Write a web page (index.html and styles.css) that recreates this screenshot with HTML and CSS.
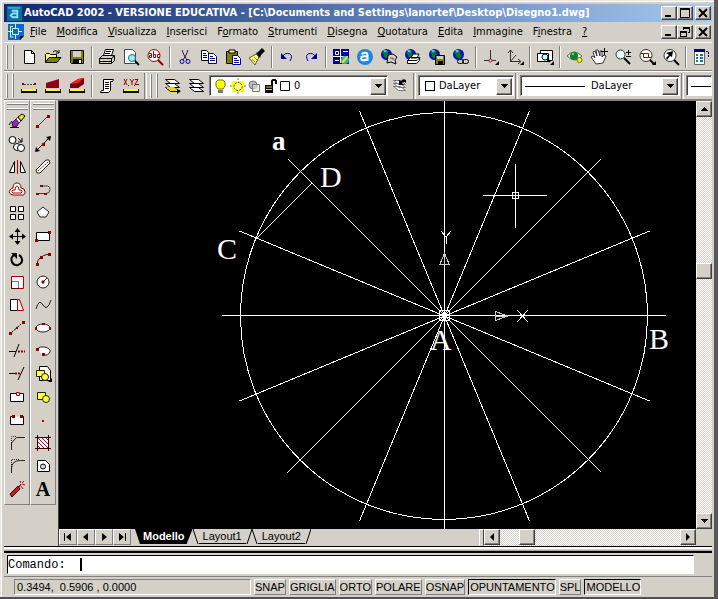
FILE: index.html
```html
<!DOCTYPE html>
<html lang="it">
<head>
<meta charset="utf-8">
<title>AutoCAD 2002</title>
<link rel="stylesheet" href="styles.css">
</head>
<body>
<svg class="defs" aria-hidden="true">
  <symbol id="globe" viewBox="0 0 10 10"><circle cx="5" cy="5" r="5" fill="#0018b0"/><path d="M1 3l3-2 3 1-1 2 2 2-2 3-3-2-1-3z" fill="#087830"/><path d="M2 1h3v2H3z" fill="#50c8e8"/></symbol>
  <symbol id="down" viewBox="0 0 8 8"><path d="M1 2h7v1H7v1H6v1H5v1H4V5H3V4H2V3H1z"/></symbol>
  <symbol id="up" viewBox="0 0 8 8"><path d="M4 2h1v1h1v1h1v1h1v1H1V5h1V4h1V3h1z"/></symbol>
  <symbol id="left" viewBox="0 0 8 8"><path d="M2 4l4-4v8z"/></symbol>
  <symbol id="right" viewBox="0 0 8 8"><path d="M6 4L2 0v8z"/></symbol>
  <symbol id="sheets" viewBox="0 0 18 18"><path d="M1.500 10.500h9l5 4h-9zM1.500 6.500h9l5 4h-9zM1.500 2.500h9l5 4h-9z" fill="#fff" stroke="#000"/></symbol>
</svg>
<div class="app">
  <header class="title">
    <svg class="logo" viewBox="0 0 16 16"><path fill="#0c6c9c" d="M0 0h16v16H0z"/><path fill="#28a8d8" d="M1 1h13v2H1z"/><path d="M5 5h6v7H6l-2-2 2-2h4" fill="none" stroke="#8ce0f8" stroke-width="2"/></svg>
    <h1>AutoCAD 2002 - VERSIONE EDUCATIVA - [C:\Documents and Settings\lanortef\Desktop\Disegno1.dwg]</h1>
    <div class="winbtns">
      <button aria-label="Riduci"><svg viewBox="0 0 12 10"><path d="M2 7h6v2H2z"/></svg></button>
      <button aria-label="Ingrandisci"><svg viewBox="0 0 12 10"><path d="M1 0h10v10H1zM2 2v7h8V2z" fill-rule="evenodd"/></svg></button>
      <button class="close" aria-label="Chiudi"><svg viewBox="0 0 12 10"><path d="M2 1l8 8M10 1L2 9" stroke="#000" stroke-width="2"/></svg></button>
    </div>
  </header>

  <nav class="menu">
    <svg class="doc" viewBox="0 0 16 16"><path fill="#0868d0" d="M0 0h16v12l-4 4H0z"/><path d="M12 16v-4h4z" fill="#000"/><path d="M0 7.500h5M11 7.500h3M7.500 0v4M7.500 11v4M4.500 4.500h6v6h-6zM2 2.500h3M2.500 3v10h3" stroke="#d8f0ff" fill="none"/></svg>
    <a href="#"><u>F</u>ile</a><a href="#"><u>M</u>odifica</a><a href="#"><u>V</u>isualizza</a><a href="#"><u>I</u>nserisci</a><a href="#">F<u>o</u>rmato</a><a href="#"><u>S</u>trumenti</a><a href="#"><u>D</u>isegna</a><a href="#"><u>Q</u>uotatura</a><a href="#"><u>E</u>dita</a><a href="#"><u>I</u>mmagine</a><a href="#">F<u>i</u>nestra</a><a href="#"><u>?</u></a>
    <div class="winbtns">
      <button aria-label="Riduci disegno"><svg viewBox="0 0 12 10"><path d="M2 7h6v2H2z"/></svg></button>
      <button aria-label="Ripristina disegno"><svg viewBox="0 0 12 10"><path d="M4 0h7v6H9V5h1V2H5v1H4zM1 4h7v6H1zM2 6v3h5V6z" fill-rule="evenodd"/></svg></button>
      <button class="close" aria-label="Chiudi disegno"><svg viewBox="0 0 12 10"><path d="M2 1l8 8M10 1L2 9" stroke="#000" stroke-width="2"/></svg></button>
    </div>
  </nav>

  <div class="bar">
    <i class="grip"></i>
    <button class="t" aria-label="Nuovo"><svg viewBox="0 0 18 18"><path d="M4.500 2.500h7l3 3v10h-10z" fill="#fff" stroke="#000"/><path d="M11.500 2.500v3h3" fill="none" stroke="#000"/></svg></button>
    <button class="t" aria-label="Apri"><svg viewBox="0 0 18 18"><path d="M1.500 14V6.500l1-1h3l1 1h6V9" fill="#ffff80" stroke="#000"/><path d="M1.500 14.500L5 9.500h12l-4 5z" fill="#808000" stroke="#000"/><path d="M9 4q3-3 6 1M15 2v3h-3" fill="none" stroke="#000"/></svg></button>
    <button class="t" aria-label="Salva"><svg viewBox="0 0 18 18"><path d="M2.500 2.500h13v13h-12l-1-1z" fill="#808000" stroke="#000"/><path d="M5 3h8v6H5z" fill="#d4d0c8"/><path d="M5 11h9v4H5z"/><path d="M11 12h2v3h-2z" fill="#fff"/></svg></button>
    <i class="sep"></i>
    <button class="t" aria-label="Stampa"><svg viewBox="0 0 18 18"><path d="M5.500 7.500l2-6h8l-2 6z" fill="#fff" stroke="#000"/><path d="M8 3.500h5M7 5.500h5" stroke="#000"/><path d="M1.500 10.500l3-3h12v5l-3 3h-12z" fill="#d4d0c8" stroke="#000"/><path d="M1 10.500h13l2-3M13.500 10v5M2 13.500h11" stroke="#000" fill="none"/><path d="M10 12h2v1h-2z" fill="#cc0"/></svg></button>
    <button class="t" aria-label="Anteprima"><svg viewBox="0 0 18 18"><path d="M2.500 1.500h8l3 3v11h-11z" fill="#fff" stroke="#444"/><circle cx="10" cy="10" r="3.500" fill="#a0f0f8" stroke="#007090"/><path d="M13 13l4 4" stroke="#000" stroke-width="2"/></svg></button>
    <button class="t" aria-label="Trova"><svg viewBox="0 0 18 18"><circle cx="8" cy="7.500" r="6" fill="#fff" stroke="#900000"/><path d="M12 12l5 5" stroke="#900000" stroke-width="2"/><path d="M3 5.500h2.500v4h-2v-2h2M7.500 3v6.500h2v-3h-2M14 6.500h-2.500v3H14" fill="none" stroke="#b00000"/></svg></button>
    <i class="sep"></i>
    <button class="t" aria-label="Taglia"><svg viewBox="0 0 18 18"><path d="M6 2l2 5 3 5M12 2l-2 5-3 5" fill="none" stroke="#202040"/><circle cx="6" cy="13.500" r="2" fill="none" stroke="#000090"/><circle cx="12" cy="13.500" r="2" fill="none" stroke="#000090"/></svg></button>
    <button class="t" aria-label="Copia"><svg viewBox="0 0 18 18"><path d="M1.500 2.500h5l2 2v8h-7z" fill="#fff" stroke="#000"/><path d="M3 5.500h3M3 7.500h4M3 9.500h4" stroke="#000"/><path d="M8.500 5.500h5l3 3v7h-8z" fill="#fff" stroke="#000090"/><path d="M10 8.500h3M10 10.500h5M10 12.500h5" stroke="#000090"/></svg></button>
    <button class="t" aria-label="Incolla"><svg viewBox="0 0 18 18"><path d="M2.500 3.500h11v12h-11z" fill="#808000" stroke="#000"/><path d="M5 2h6v3H5z" fill="#ff8" stroke="#000"/><path d="M8.500 7.500h5l3 3v6h-8z" fill="#fff" stroke="#000090"/><path d="M10 10.500h3M10 12.500h5M10 14.500h5" stroke="#000090"/></svg></button>
    <button class="t" aria-label="Corrispondenza"><svg viewBox="0 0 18 18"><path d="M1 10l7-4 3 3-4 8z" fill="#ffff60" stroke="#555"/><path d="M4 11l3 3M6 9l3 3" stroke="#886"/><path d="M8 5l2-1 4-4 3 3-4 4-1 3z"/></svg></button>
    <i class="sep"></i>
    <button class="t" aria-label="Annulla"><svg viewBox="0 0 18 18"><path d="M4 9q3-5 8-3 3 2 0 7" fill="none" stroke="#000090"/><path d="M3 5v6h6z" fill="#000090"/></svg></button>
    <button class="t" aria-label="Ripeti"><svg viewBox="0 0 18 18"><path d="M14 9q-3-5-8-3-3 2 0 7" fill="none" stroke="#000090"/><path d="M15 5v6H9z" fill="#000090"/></svg></button>
    <i class="sep"></i>
    <button class="t" aria-label="Today"><svg viewBox="0 0 18 18"><path fill="#000090" d="M1 1h16v15H1z"/><path d="M1 8.500h15M8.500 1v14M3.500 3.500h3v3h-3zM11 3.500h5M3 12.500h4" stroke="#fff" fill="none"/><circle cx="13" cy="12" r="4" fill="#28b8b0"/><path d="M10 15l5-6" stroke="#fd0" stroke-width="2"/></svg></button>
    <button class="t" aria-label="Point A"><svg viewBox="0 0 18 18"><circle cx="9" cy="9" r="8" fill="#1888e0"/><path d="M5.500 6q6-3 6 1v6M11 8.500q-6-1-6 2t6 1" fill="none" stroke="#fff" stroke-width="2"/></svg></button>
    <button class="t" aria-label="Meet Now"><svg viewBox="0 0 18 18"><use href="#globe" x="1" y="1" width="11" height="11"/><path d="M8 7l5-1 4 3-2 3 1 4-5-2-4 1z" fill="#d4d0c8" stroke="#000"/><path d="M10 10h3v2" fill="none" stroke="#555"/></svg></button>
    <button class="t" aria-label="Pubblica"><svg viewBox="0 0 18 18"><use href="#globe" x="1" y="1" width="11" height="11"/><path d="M7 10l2-4h6l-2 4zM3.500 12.500l3-3h9v3l-3 3h-9z" fill="#fff" stroke="#000"/><path d="M3 12.500h10l3-3" fill="none" stroke="#000"/></svg></button>
    <button class="t" aria-label="eTransmit"><svg viewBox="0 0 18 18"><use href="#globe" x="1" y="1" width="11" height="11"/><path d="M7.500 7.500h9v9h-9z" fill="#808000" stroke="#000"/><path d="M9 8h6v3H9z" fill="#d4d0c8"/><path d="M10 13h5v3h-5z"/></svg></button>
    <button class="t" aria-label="Collegamento"><svg viewBox="0 0 18 18"><use href="#globe" x="1" y="1" width="11" height="11"/><rect x="5.500" y="11.500" width="6" height="4" rx="2" fill="#ccc" stroke="#000"/><rect x="10.500" y="11.500" width="6" height="4" rx="2" fill="none" stroke="#000"/></svg></button>
    <i class="sep"></i>
    <button class="t" aria-label="Tracking"><svg viewBox="0 0 18 18"><path d="M8.500 2v10M2 12.500h12" stroke="#333"/><circle cx="8.500" cy="12.500" r="1.500" fill="#fff" stroke="#900"/><path d="M17 13v4h-4z"/></svg></button>
    <button class="t" aria-label="UCS"><svg viewBox="0 0 18 18"><path d="M4.500 2v11.500H14M4 14l6-7M2 5l2.500-3L7 5M12 11l3 2.500-3 2.500" fill="none" stroke="#333"/><path d="M18 13v4h-4z"/></svg></button>
    <i class="sep"></i>
    <button class="t" aria-label="Viste"><svg viewBox="0 0 18 18"><path d="M4.500 2.500h12v10h-12z" fill="#fff" stroke="#000"/><path d="M1.500 5.500h11v8h-11z" fill="#fff" stroke="#000"/><circle cx="9" cy="9" r="3" fill="#bff" stroke="#000"/><path d="M11 11l3 3" stroke="#000" stroke-width="2"/><path d="M18 13v4h-4z"/></svg></button>
    <i class="sep"></i>
    <button class="t" aria-label="Vista aerea"><svg viewBox="0 0 18 18"><path d="M1 8q7-8 15 0-7 8-15 0z" fill="#e8f8e8" stroke="#487848"/><circle cx="8" cy="8" r="4" fill="#108030"/><path d="M6 5h2v2H6z" fill="#6d6"/><circle cx="13.500" cy="12" r="2.500" fill="#ff0" stroke="#663"/></svg></button>
    <button class="t" aria-label="Pan"><svg viewBox="0 0 18 18"><path d="M6 16l-5-7 2-1 2 2-2-6 2-1 2 5-1-6h2l2 6V3h2v6l2-2 2 1-3 7z" fill="#fff" stroke="#333"/><path d="M14.500 0v7M11 3.500h7" stroke="#000"/></svg></button>
    <button class="t" aria-label="Zoom realtime"><svg viewBox="0 0 18 18"><circle cx="6.500" cy="6.500" r="4.500" fill="#e8ffff" stroke="#333"/><path d="M10 10l6 6" stroke="#000" stroke-width="2"/><path d="M12 4.500h5M14.500 2v5M12 8.500h5" stroke="#000"/></svg></button>
    <button class="t" aria-label="Zoom finestra"><svg viewBox="0 0 18 18"><circle cx="8" cy="7.500" r="6" fill="#fff" stroke="#333"/><path d="M5.500 5.500h5v4h-5zM3 5.500h3M10 9.500h3" fill="none" stroke="#a00"/><path d="M12 12l4 4" stroke="#000" stroke-width="2"/><path d="M18 13v4h-4z"/></svg></button>
    <button class="t" aria-label="Zoom precedente"><svg viewBox="0 0 18 18"><circle cx="8" cy="7.500" r="6" fill="#fff" stroke="#333"/><path d="M4 5l7-2-1 6-2-1-3 4-1-2 3-3z"/><path d="M12 12l5 5" stroke="#000" stroke-width="2"/></svg></button>
    <i class="sep"></i>
    <button class="t" aria-label="Proprietà"><svg viewBox="0 0 18 18"><path d="M2.500 1.500h10v15h-10z" fill="#fff" stroke="#666"/><path d="M2 1h11v3H2z" fill="#000090"/><path d="M4 7h2m2 0h3M4 10h2m2 0h3M4 13h2m2 0h3" stroke="#088098" stroke-width="2"/><path d="M14 3.500h2.500V10" fill="none" stroke="#000090" stroke-dasharray="2 1"/></svg></button>
  </div>

  <div class="bar second">
    <i class="grip"></i>
    <button class="t" aria-label="Distanza"><svg viewBox="0 0 18 18"><path d="M2 6h2v2H2zM14 6h2v2h-2z" fill="#800000"/><path d="M4 7.500h10" stroke="#444" stroke-dasharray="2 1"/><path d="M1 12h16v4H1z"/><path d="M2 12h14v2H2z" fill="#ff0"/></svg></button>
    <button class="t" aria-label="Area"><svg viewBox="0 0 18 18"><path d="M2 11V6l13-4v9z" fill="#900018"/><path d="M1 12h16v4H1z"/><path d="M2 12h14v2H2z" fill="#ff0"/></svg></button>
    <button class="t" aria-label="Massa"><svg viewBox="0 0 18 18"><path d="M2 11V7l8-5 6-1v6l-6 4z" fill="#800010"/><path d="M2 7l8-5 6-1-6 5z" fill="#ff2020"/><path d="M10 7v4" stroke="#300"/><path d="M1 12h16v4H1z"/><path d="M2 12h14v2H2z" fill="#ff0"/></svg></button>
    <i class="sep"></i>
    <button class="t" aria-label="Lista"><svg viewBox="0 0 18 18"><path d="M5.500 2.500h10l-1 2h-2v9l-2 2h-8l1-2h2z" fill="#fff" stroke="#000"/><path d="M7 5.500h4M7 7.500h4M7 9.500h4M7 11.500h4" stroke="#000"/></svg></button>
    <button class="t" aria-label="Individua punto"><svg viewBox="0 0 18 18"><path d="M2 2l3 6M5 2L2 8M8 2l2 3 2-3M10 5v3M13 2.500h3l-3 5h4M6.500 8v1M12.500 8v1" stroke="#900000" fill="none"/><path d="M1 12h16v4H1z"/><path d="M2 12h14v2H2z" fill="#ff0"/></svg></button>
    <i class="edge"></i><i class="grip double"></i>
    <button class="t" aria-label="Layer corrente"><svg viewBox="0 0 18 18"><use href="#sheets" width="18" height="18"/><path d="M2 10h8l5 4H7z" fill="#e8d800"/><path d="M13 12l4 2-4 3z"/></svg></button>
    <button class="t" aria-label="Layer"><svg viewBox="0 0 18 18"><use href="#sheets" width="18" height="18"/></svg></button>
    <div class="combo layer">
      <svg class="state" viewBox="0 0 82 16"><path d="M6 2h5l2 2v4l-2 3H6L4 8V4z" fill="#ff0" stroke="#770"/><path d="M6 12h5v3H6z" fill="#777"/><path d="M20 3h12v11H20z" fill="#ff0"/><circle cx="26" cy="8.500" r="4" fill="#ffff80" stroke="#550" stroke-dasharray="2 1"/><path d="M18 8h2M32 8h2M25 1h2M25 15h2" stroke="#880"/><circle cx="41" cy="7" r="4" fill="#bbb" stroke="#777"/><path d="M40.500 6.500h7v7h-7z" fill="#ddd" fill-opacity=".6" stroke="#777"/><path d="M53 7h8v8h-8z"/><path d="M54 9h6M54 11.500h6" stroke="#dd0"/><path d="M60 7V3l1-1h2l1 1v3" fill="none" stroke="#000" stroke-width="2"/><path d="M68.500 3.500h9v9h-9z" fill="#fff" stroke="#000"/></svg>
      <select aria-label="Layer"><option>0</option></select><span class="arrow"><svg viewBox="0 0 8 8"><use href="#down"/></svg></span>
    </div>
    <button class="t" aria-label="Layer precedente"><svg viewBox="0 0 18 18"><path d="M2.500 9.500h7l5 4h-7zM2.500 6.500h7l5 4h-7zM2.500 3.500h7l5 4h-7z" fill="#fff" stroke="#777"/><path d="M8 3v5h5l-2-2q2-2 4 0V3q-3-2-5 1z"/></svg></button>
    <i class="edge"></i>
    <div class="combo color"><i class="swatch"></i><select aria-label="Colore"><option>DaLayer</option></select><span class="arrow"><svg viewBox="0 0 8 8"><use href="#down"/></svg></span></div>
    <i class="edge"></i>
    <div class="combo ltype"><i class="line"></i><select aria-label="Tipo di linea"><option>DaLayer</option></select><span class="arrow"><svg viewBox="0 0 8 8"><use href="#down"/></svg></span></div>
    <i class="edge"></i>
    <div class="combo weight"><i class="line"></i></div>
  </div>

  <main class="main">
    <div class="palettes">
      <div class="palette"><i class="hgrip"></i>
        <button aria-label="Cancella"><svg viewBox="0 0 18 18"><path d="M2 15.500h9M1 13l3-4" stroke="#000"/><path d="M4 11l4-4 3 4-3 4H5z" fill="#a020c0" stroke="#303"/><path d="M8 7l2-2 3 4-2 2z" fill="#fff" stroke="#444"/><path d="M10 5l4-3 3 2-4 5z" fill="#f0e020" stroke="#000"/></svg></button>
        <button aria-label="Copia oggetto"><svg viewBox="0 0 18 18"><circle cx="4.500" cy="5" r="3.500" fill="#fff" stroke="#000"/><circle cx="9" cy="12" r="3.500" fill="#fff" stroke="#000"/><circle cx="13" cy="13" r="3.500" fill="#fff" stroke="#000"/><path d="M10 3l4 4M14 3v4h-4" fill="none" stroke="#000"/></svg></button>
        <button aria-label="Specchio"><svg viewBox="0 0 18 18"><path d="M6.500 3.500v11h-5zM12.500 3.500v11h5z" fill="#fff" stroke="#000"/><path d="M9.500 2v14" stroke="#b00000"/></svg></button>
        <button aria-label="Offset"><svg viewBox="0 0 18 18"><path d="M5 14q-5-1-3-5 1-2 3-2 0-5 4-5t4 5q4 0 4 4t-4 3z" fill="#fff" stroke="#800000"/><path d="M5 12q-3-3 2-3 0-4 2-4t2 4q5 0 2 3z" fill="none" stroke="#b00000"/></svg></button>
        <button aria-label="Serie"><svg viewBox="0 0 18 18"><path d="M2.500 2.500h5v5h-5zM10.500 2.500h5v5h-5zM2.500 10.500h5v5h-5zM10.500 10.500h5v5h-5z" fill="#fff" stroke="#000"/></svg></button>
        <button aria-label="Sposta"><svg viewBox="0 0 18 18"><path d="M9.500 3v13M3 9.500h13" stroke="#000"/><path d="M9.500 1l3 4h-6zM9.500 18l3-4h-6zM1 9.500l4-3v6zM18 9.500l-4-3v6z"/></svg></button>
        <button aria-label="Ruota"><svg viewBox="0 0 18 18"><path d="M6 5q-4 3-2 7t6 3q5-2 4-6-1-3-3-4" fill="none" stroke="#000" stroke-width="2"/><path d="M3 3h6v6z"/></svg></button>
        <button aria-label="Scala"><svg viewBox="0 0 18 18"><path d="M3.500 3.500h12v12h-12z" fill="#fff" stroke="#b00000"/><path d="M3.500 8.500h7v7h-7z" fill="none" stroke="#000" stroke-dasharray="1 1"/></svg></button>
        <button aria-label="Stira"><svg viewBox="0 0 18 18"><path d="M2.500 3.500h7v11h-7z" fill="#fff" stroke="#000"/><path d="M9.500 3.500h2l4 11h-6z" fill="#eee" stroke="#b00000"/></svg></button>
        <button aria-label="Allunga"><svg viewBox="0 0 18 18"><path d="M3 14l10-9" stroke="#000" stroke-dasharray="3 1"/><path d="M1 13h3v3H1zM14 2h3v3h-3zM8 8h2v2H8z" fill="#900000"/></svg></button>
        <button aria-label="Taglia linea"><svg viewBox="0 0 18 18"><path d="M6 15l5-13M1 9.500h7" stroke="#000"/><path d="M10 9.500h7" stroke="#900000" stroke-width="2" stroke-dasharray="2 1"/></svg></button>
        <button aria-label="Estendi"><svg viewBox="0 0 18 18"><path d="M10 15l6-13M1 8.500h6" stroke="#000"/><path d="M7 8.500h6" stroke="#900000" stroke-width="2" stroke-dasharray="2 1"/></svg></button>
        <button aria-label="Spezza in un punto"><svg viewBox="0 0 18 18"><path d="M2.500 5.500h13v8h-13z" fill="#fff" stroke="#000"/><path d="M8.500 4.500h3v3h-3z" fill="#fff" stroke="#b00000"/></svg></button>
        <button aria-label="Spezza"><svg viewBox="0 0 18 18"><path d="M5 5.500H2.500v8h13v-8H13" fill="#fff" stroke="#000"/><path d="M4 4h3v3H4zM12 4h3v3h-3z" fill="#900000"/></svg></button>
        <button aria-label="Cima"><svg viewBox="0 0 18 18"><path d="M3.500 16V9l5-5.500H17" fill="none" stroke="#222"/><path d="M3.500 9V2.500H9" fill="none" stroke="#222" stroke-dasharray="1 1"/></svg></button>
        <button aria-label="Raccordo"><svg viewBox="0 0 18 18"><path d="M3.500 16v-4q0-8.500 9-8.500H17" fill="none" stroke="#222"/><path d="M3.500 12V2.500H12" fill="none" stroke="#222" stroke-dasharray="1 1"/></svg></button>
        <button aria-label="Esplodi"><svg viewBox="0 0 18 18"><path d="M2 14l8-8 2 3-8 8z" fill="#d01818" stroke="#300"/><path d="M11 7l2-3" stroke="#000"/><path d="M12 1l1 2M16 1l-2 2M17 5l-3-1M15 9l-2-3" stroke="#c00"/></svg></button>
      </div>
      <div class="palette"><i class="hgrip"></i>
        <button aria-label="Linea"><svg viewBox="0 0 18 18"><path d="M4 14L14 4" stroke="#444"/><path d="M2 13h3v3H2zM13 3h3v3h-3z" fill="#900000"/></svg></button>
        <button aria-label="Linea di costruzione"><svg viewBox="0 0 18 18"><path d="M3 15L15 3" stroke="#000"/><path d="M1 17l1-5 4 4zM17 1l-5 1 4 4z"/><path d="M8 8h3v3H8z" fill="#900000"/></svg></button>
        <button aria-label="Multilinea"><svg viewBox="0 0 18 18"><path d="M2 12L12 2h3l1 3L6 15H3z" fill="#fff" stroke="#222"/><path d="M4 13L14 4" stroke="#900000" stroke-dasharray="2 1"/></svg></button>
        <button aria-label="Polilinea"><svg viewBox="0 0 18 18"><path d="M3 12.500h9q4 0 4-4t-4-3.500H7" fill="none" stroke="#444"/><path d="M2 12h3v2H2zM10 12h3v2h-3zM6 4h3v2H6z" fill="#900000"/></svg></button>
        <button aria-label="Poligono"><svg viewBox="0 0 18 18"><path d="M9 3l6 5-3 5H6L3 8z" fill="#fff" stroke="#222"/></svg></button>
        <button aria-label="Rettangolo"><svg viewBox="0 0 18 18"><path d="M2.500 5.500h13v8h-13z" fill="#fff" stroke="#000"/><path d="M1 12h3v3H1zM14 4h3v3h-3z" fill="#900000"/></svg></button>
        <button aria-label="Arco"><svg viewBox="0 0 18 18"><path d="M3 15q0-9 12-11" fill="none" stroke="#222"/><path d="M2 13h3v3H2zM6 6h3v3H6zM14 3h3v3h-3z" fill="#900000"/></svg></button>
        <button aria-label="Cerchio"><svg viewBox="0 0 18 18"><circle cx="9" cy="9" r="6" fill="#fff" stroke="#222"/><path d="M9 9l4-4M8 8h2v2H8z" stroke="#900000"/></svg></button>
        <button aria-label="Spline"><svg viewBox="0 0 18 18"><path d="M2 13q3-11 7-4t8-5" fill="none" stroke="#222"/></svg></button>
        <button aria-label="Ellisse"><svg viewBox="0 0 18 18"><ellipse cx="9" cy="9" rx="7" ry="4" fill="#fff" stroke="#222"/><path d="M1 8h2v3H1zM15 8h2v3h-2zM8 4h3v2H8z" fill="#900000"/></svg></button>
        <button aria-label="Arco di ellisse"><svg viewBox="0 0 18 18"><path d="M3 7q3-3 8-2 6 2 5 5-2 4-7 3" fill="#fff" stroke="#222"/><path d="M2 6h3v3H2zM8 11h3v3H8z" fill="#900000"/></svg></button>
        <button aria-label="Inserisci blocco"><svg viewBox="0 0 18 18"><path d="M5.500 1.500h8l3 4v10h-11z" fill="#fff" stroke="#000"/><path d="M2.500 5.500h8v6h-8z" fill="#ffff40" stroke="#220"/><circle cx="11" cy="12" r="3.500" fill="#ffff40" stroke="#220"/><path d="M18 13v4h-4z"/></svg></button>
        <button aria-label="Crea blocco"><svg viewBox="0 0 18 18"><path d="M3.500 4.500h8v7h-8z" fill="#ffff40" stroke="#220"/><circle cx="12" cy="11" r="3.500" fill="#ffff40" stroke="#220"/></svg></button>
        <button aria-label="Punto"><svg viewBox="0 0 18 18"><path d="M8 9h2v2H8z" fill="#b00000"/></svg></button>
        <button aria-label="Tratteggio"><svg viewBox="0 0 18 18"><path d="M4 4h10v10H4z" fill="#fff"/><path d="M4 8l6 6M4 4l10 10M8 4l6 6M4 12l2 2M12 4l2 2" stroke="#b00020"/><path d="M3.500 1v16M14.500 1v16M1 3.500h16M1 14.500h16" stroke="#400"/></svg></button>
        <button aria-label="Regione"><svg viewBox="0 0 18 18"><path d="M3.500 3.500h8l4 4v7h-12z" fill="#fff" stroke="#000"/><circle cx="9" cy="9.500" r="2.500" fill="#ddd" stroke="#000"/></svg></button>
        <button class="mtext" aria-label="Testo multilinea">A</button>
      </div>
    </div>

    <section class="view">
      <div class="viewport">
        <svg class="drawing" viewBox="59 101 637 428" preserveAspectRatio="none">
          <g class="geo">
            <circle cx="444" cy="316" r="203.500"/>
            <path d="M222 315.500H666M444.500 101V529M288 159L601 472M601 159L287 473M359.500 111L529.500 521M529.500 111L359.500 521M239.500 231L649.500 401M649.500 231L239.500 401M256.500 238.500L312 183"/>
            <path d="M483 195.500H547M515.500 164V228M512.500 192.500h6v6h-6zM439.500 310.500h10v10h-10zM442.500 313.500h4v4h-4z"/>
            <path d="M444.500 253l4.500 11h-9zM444.500 253v11M495.500 311.500v9l12-4.500zM495 316h12" class="soft"/>
            <path d="M441 231l5 6 5-6M446.500 237v7M517 310l11 12M528 310l-11 12"/>
          </g>
          <g class="labels"><text x="430" y="350">A</text><text x="649" y="349">B</text><text x="217" y="259">C</text><text x="320" y="187">D</text><text x="272" y="150" class="bold">a</text></g>
        </svg>
        <div class="vscroll">
          <button aria-label="Su"><svg viewBox="0 0 8 8"><use href="#up"/></svg></button><i class="before"></i><i class="thumb"></i><i class="after"></i><button aria-label="Giù"><svg viewBox="0 0 8 8"><use href="#down"/></svg></button>
        </div>
      </div>
      <div class="tabs">
        <button class="nav" aria-label="Primo"><svg viewBox="0 0 10 10"><path d="M1 1h1v8H1zM8 1v8L3 5z"/></svg></button>
        <button class="nav" aria-label="Precedente"><svg viewBox="0 0 10 10"><path d="M7 1v8L2 5z"/></svg></button>
        <button class="nav" aria-label="Successivo"><svg viewBox="0 0 10 10"><path d="M3 1v8l5-4z"/></svg></button>
        <button class="nav" aria-label="Ultimo"><svg viewBox="0 0 10 10"><path d="M8 1h1v8H8zM2 1v8l5-4z"/></svg></button>
        <button class="tab active"><span>Modello</span></button>
        <button class="tab"><svg viewBox="0 0 6 15"><path d="M0 0l5 15"/></svg><span>Layout1</span><svg viewBox="0 0 6 15"><path d="M6 0L1 15"/></svg></button>
        <button class="tab"><svg viewBox="0 0 6 15"><path d="M0 0l5 15"/></svg><span>Layout2</span><svg viewBox="0 0 6 15"><path d="M6 0L1 15"/></svg></button>
        <div class="hscroll">
          <i class="split"></i><button aria-label="Sinistra"><svg viewBox="0 0 8 8"><use href="#left"/></svg></button><i class="before"></i><i class="thumb"></i><i class="after"></i><button aria-label="Destra"><svg viewBox="0 0 8 8"><use href="#right"/></svg></button>
        </div>
      </div>
    </section>
  </main>

  <div class="divider"></div>
  <div class="command"><label for="cmd">Comando:</label><i class="caret"></i><input id="cmd" type="text"></div>

  <footer class="status">
    <output>0.3494,&nbsp; 0.5906 , 0.0000</output>
    <button>SNAP</button><button>GRIGLIA</button><button>ORTO</button><button>POLARE</button><button>OSNAP</button><button class="on">OPUNTAMENTO</button><button>SPL</button><button class="on">MODELLO</button>
  </footer>
</div>
</body>
</html>
```
FILE: styles.css
```css
:root {
  --face: #d4d0c8;
  --shade: #808080;
  --dark: #404040;
}
* { box-sizing: border-box; }
body { margin: 0; background: var(--face); color: #000; font: 11px/14px "Liberation Sans", sans-serif; }
button, select, input { font: inherit; color: inherit; border: 0; padding: 0; margin: 0; background: none; border-radius: 0; }
svg { display: block; flex: none; }
i { display: block; flex: none; }
.defs { position: absolute; width: 0; height: 0; }

.app { min-height: 100vh; display: flex; flex-direction: column; padding: 4px 2px 1px 4px; background: var(--face); border-right: 4px solid #58585c; border-bottom: 2px solid #505054; box-shadow: inset 1px 1px #e8e6e0, inset 2px 2px #fff; }

.title { display: flex; align-items: center; height: 18px; padding: 0 1px 0 3px; background: linear-gradient(90deg, #0c2870, #a6caf0); color: #fff; }
.logo { width: 15px; height: 15px; }
.title h1 { flex: 1; margin: 0 0 0 2px; font: bold 11px/16px "DejaVu Sans Condensed", sans-serif; white-space: nowrap; }
.winbtns { display: flex; margin-left: auto; }
.winbtns button { width: 16px; height: 14px; display: grid; place-items: center; }
.winbtns .close { margin-left: 2px; }
.winbtns svg { width: 12px; height: 10px; }
.winbtns button, .arrow, .vscroll button, .hscroll button, .thumb, .nav { background: var(--face); border: 1px solid; border-color: #fff var(--dark) var(--dark) #fff; box-shadow: inset -1px -1px var(--shade); }

.menu { display: flex; align-items: center; gap: 10px; height: 20px; padding: 0 1px 0 4px; }
.menu .doc { width: 16px; height: 16px; margin-right: -4px; }
.menu a { color: #000; text-decoration: none; font: 11px/14px "DejaVu Sans Condensed", sans-serif; }

.bar { display: flex; align-items: center; height: 29px; padding-left: 2px; border-top: 1px solid #fff; border-bottom: 1px solid var(--shade); overflow: hidden; white-space: nowrap; }
.grip { width: 7px; height: 24px; margin-right: 4px; border: solid #fff; border-width: 0 1px; box-shadow: 1px 0 var(--shade), inset 1px 0 var(--shade); }
.double { margin: 0 4px 0 1px; }
.sep { width: 6px; height: 22px; background: linear-gradient(90deg, transparent 2px, var(--shade) 2px 3px, #fff 3px 4px, transparent 4px); }
.edge { width: 3px; height: 26px; border-left: 1px solid var(--shade); border-right: 1px solid #fff; margin: 0 2px 0 1px; }
.t { width: 24px; height: 24px; flex: none; display: grid; place-items: center; }
.t svg { width: 18px; height: 18px; }

.combo { display: flex; align-items: center; height: 21px; background: #fff; border: 1px solid; border-color: var(--shade) #fff #fff var(--shade); box-shadow: inset 1px 1px var(--dark); padding: 2px 1px 1px 2px; }
.combo select { appearance: none; flex: 1; min-width: 0; font: 11px/14px "DejaVu Sans Condensed", sans-serif; }
.arrow { width: 16px; height: 17px; display: grid; place-items: center; pointer-events: none; }
.arrow svg, .vscroll svg, .hscroll svg { width: 8px; height: 8px; }
.layer { flex: 0 1 179px; }
.state { width: 82px; height: 16px; }
.color { flex: 0 1 96px; }
.swatch { width: 10px; height: 10px; border: 1px solid #000; margin: 0 4px 0 4px; }
.ltype { flex: 0 1 160px; }
.line { width: 60px; height: 1px; background: #000; margin: 0 6px 0 2px; }
.weight { flex: 1; min-width: 0; overflow: hidden; }

.main { flex: 1; display: flex; }
.palettes { display: flex; align-items: flex-start; padding-right: 2px; }
.palette { width: 26px; padding-top: 2px; padding-bottom: 4px; display: flex; flex-direction: column; align-items: center; border: 1px solid; border-color: #fff var(--shade) var(--shade) #fff; }
.hgrip { width: 21px; height: 6px; border: solid #fff; border-width: 1px 0; box-shadow: 0 1px var(--shade), inset 0 1px var(--shade); }
.palette button { width: 23px; height: 23px; display: grid; place-items: center; }
.palette svg { width: 18px; height: 18px; }
.palette .mtext { font: bold 20px/20px "Liberation Serif", serif; }

.view { flex: 1; min-width: 0; display: flex; flex-direction: column; border-top: 1px solid var(--shade); border-left: 1px solid var(--dark); }
.viewport { flex: 1; display: flex; min-height: 0; }
.drawing { flex: 1 1 0; min-width: 0; background: #000; }
.geo { fill: none; stroke: #fff; stroke-width: 1; shape-rendering: crispEdges; }
.geo .soft { stroke: #ccc; }
.labels { fill: #fff; font: 30px "Liberation Serif", serif; }
.labels .bold { font-weight: bold; font-size: 27px; }

.vscroll, .hscroll { display: flex; background: repeating-conic-gradient(#fff 0 25%, var(--face) 0 50%) 0 0 / 2px 2px; }
.vscroll { width: 16px; flex-direction: column; }
.vscroll button, .hscroll button, .thumb { width: 16px; height: 16px; flex: none; display: grid; place-items: center; }
.vscroll .before { flex: 146; }
.vscroll .after { flex: 233; }

.tabs { display: flex; height: 17px; padding-right: 16px; background: var(--face); }
.nav { width: 18px; height: 16px; display: grid; place-items: center; box-shadow: none; border-color: #fff var(--shade) var(--shade) #fff; }
.nav svg { width: 10px; height: 10px; }
.tab { display: flex; height: 15px; }
.tab svg { width: 6px; height: 15px; fill: none; stroke: #000; }
.tab span { padding: 0 4px; border-bottom: 1px solid #000; height: 15px; line-height: 15px; }
.tab.active { margin-left: 4px; padding: 0 4px; background: #000; color: #fff; font-weight: bold; clip-path: polygon(0 0, 100% 0, calc(100% - 6px) 100%, 5px 100%); }
.hscroll { width: 34%; margin-left: auto; }
.split { width: 5px; background: var(--face); border: 1px solid; border-color: #fff var(--dark) var(--face) #fff; }
.hscroll .before { flex: 19; }
.hscroll .after { flex: 146; }

.divider { height: 7px; margin: 0 0 2px; border-top: 1px solid #000; border-bottom: 2px solid #000; background: linear-gradient(#fff 2px, var(--face) 2px 3px, #a8a8a8 3px); }
.command { display: flex; align-items: center; height: 19px; margin: 0 18px 2px 3px; background: #fff; border: 1px solid; border-color: #000 #fff #fff #000; font: 12px/16px "Liberation Mono", monospace; }
.caret { width: 2px; height: 13px; margin-left: 14px; background: #000; }
.command input { flex: 1; min-width: 0; outline: 0; }

.status { display: flex; align-items: center; gap: 3px; height: 20px; padding-left: 10px; border-top: 1px solid var(--shade); }
.status output { width: 237px; height: 16px; padding-left: 2px; border: 1px solid; border-color: var(--shade) #fff #fff var(--shade); }
.status button { height: 16px; border: 1px solid; border-color: #fff var(--shade) var(--shade) #fff; line-height: 14px; }
.status .on { border-color: #000 #fff #fff #000; padding-left: 1px; }
```
